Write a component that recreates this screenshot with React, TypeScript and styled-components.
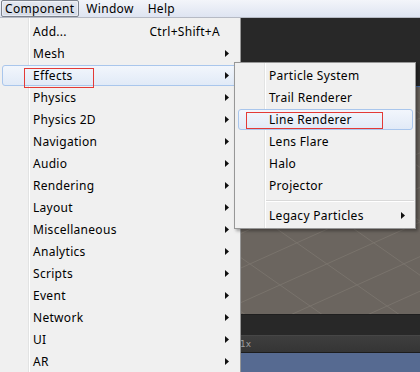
import React from "react"
import styled, { createGlobalStyle, css } from "styled-components"

const GlobalStyle = createGlobalStyle`
  html, body {
    margin: 0;
    padding: 0;
  }
  body {
    width: 420px;
    height: 372px;
    overflow: hidden;
    background: #282828;
    font-family: "Noto Sans", "Liberation Sans", sans-serif;
  }
`

const Screen = styled.div`
  display: flex;
  flex-direction: column;
  width: 420px;
  height: 372px;
`

const MenuBar = styled.div`
  display: flex;
  height: 17px;
  border-bottom: 1px solid #b6bac4;
  background: linear-gradient(#f3f5fa, #dee4f1);
  font-size: 12px;
  letter-spacing: 0.3px;
  color: #000;
`

const MenuTitle = styled.div<{ $open?: boolean }>`
  display: flex;
  align-items: center;
  box-sizing: border-box;
  height: 17px;
  padding: 0 7px;
  ${p =>
    p.$open &&
    css`
      margin-left: 1px;
      padding: 0 4px 0 3px;
      border: 1px solid #7d838e;
      border-radius: 2px;
      background: linear-gradient(#e4e8f0, #d4dae6);
      box-shadow: inset 0 0 0 1px rgba(255, 255, 255, 0.45);
    `}
`

const Workspace = styled.div`
  position: relative;
  flex: 1;
  display: flex;
  flex-direction: column;
`

const Toolbar = styled.div`
  height: 68px;
  background: #282828;
`

const Scene = styled.div`
  height: 227px;
  border-top: 1px solid #4b73ad;
  background: #6b655f;
  svg {
    display: block;
  }
`

const StatusBar = styled.div`
  height: 20px;
  border-top: 1px solid #1f1f1f;
  background: #282828;
`

const TabStrip = styled.div`
  display: flex;
  align-items: center;
  height: 16px;
  padding-left: 240px;
  border-top: 1px solid #464646;
  border-bottom: 1px solid #1c1c1c;
  background: linear-gradient(#3e3e3e, #353535);
  font-family: "DejaVu Sans", sans-serif;
  font-size: 9px;
  color: #9c9c9c;
`

const GameView = styled.div`
  flex: 1;
  background: #566a91;
`

const Menu = styled.div`
  background: #f0f0f0;
  font-size: 12px;
  letter-spacing: 0.3px;
  color: #000;
  &::before {
    content: "";
    position: absolute;
    top: 0;
    bottom: 0;
    width: 1px;
    background: #e2e3e3;
    box-shadow: 1px 0 0 #fff;
  }
`

const MainMenu = styled(Menu)`
  position: absolute;
  left: 0;
  top: 0;
  bottom: 0;
  width: 237px;
  padding: 2px 2px 0 1px;
  border-right: 1px solid #979797;
  &::before {
    left: 28px;
  }
`

const SubMenu = styled(Menu)`
  position: absolute;
  left: 234px;
  top: 44px;
  width: 177px;
  padding: 1px 1px 2px 2px;
  border: 1px solid #979797;
  box-shadow: 2px 2px 3px rgba(0, 0, 0, 0.35);
  &::before {
    left: 29px;
  }
`

const Item = styled.div<{ $active?: boolean }>`
  position: relative;
  display: grid;
  grid-template-columns: 1fr auto 4px;
  column-gap: 5px;
  align-items: center;
  box-sizing: border-box;
  height: 22px;
  padding: 0 9px 0 32px;
  white-space: nowrap;
  ${p =>
    p.$active &&
    css`
      height: 21px;
      margin: 1px 1px 0 1px;
      padding: 0 7px 0 30px;
      border: 1px solid #a9c6ec;
      border-radius: 3px;
      background: linear-gradient(#f2f6fc, #e1eaf7);
    `}
`

const Shortcut = styled.span`
  text-align: right;
`

const Separator = styled.div`
  height: 1px;
  margin: 4px 0 2px 28px;
  background: #d9d9d9;
  border-bottom: 1px solid #fff;
`

const Mark = styled.div<{ $left: number; $top: number; $w: number; $h: number }>`
  position: absolute;
  left: ${p => p.$left}px;
  top: ${p => p.$top}px;
  width: ${p => p.$w}px;
  height: ${p => p.$h}px;
  box-sizing: border-box;
  border: 1px solid #e33a36;
  pointer-events: none;
`

const Arrow = () => (
  <svg width="4" height="7" viewBox="0 0 4 7">
    <polygon points="0,0 4,3.5 0,7" fill="#111" />
  </svg>
)

type Entry = { label: string; shortcut?: string; sub?: boolean; active?: boolean }

const mainItems: Entry[] = [
  { label: "Add...", shortcut: "Ctrl+Shift+A" },
  { label: "Mesh", sub: true },
  { label: "Effects", sub: true, active: true },
  { label: "Physics", sub: true },
  { label: "Physics 2D", sub: true },
  { label: "Navigation", sub: true },
  { label: "Audio", sub: true },
  { label: "Rendering", sub: true },
  { label: "Layout", sub: true },
  { label: "Miscellaneous", sub: true },
  { label: "Analytics", sub: true },
  { label: "Scripts", sub: true },
  { label: "Event", sub: true },
  { label: "Network", sub: true },
  { label: "UI", sub: true },
  { label: "AR", sub: true },
]

const effectItems: Entry[] = [
  { label: "Particle System" },
  { label: "Trail Renderer" },
  { label: "Line Renderer", active: true },
  { label: "Lens Flare" },
  { label: "Halo" },
  { label: "Projector" },
]

// scene grid, page coords shifted up by the top of the scene (87)
const gridA = Array.from({ length: 12 }, (_, i) => 411 + 34.6 * (i - 7) - 87)
const gridB = Array.from({ length: 10 }, (_, i) => 89 + 53.9 * (i - 7) - 87)

const SceneGrid = () => (
  <svg width="420" height="227">
    {gridA.map(c => (
      <line key={"a" + c} x1={0} y1={c} x2={420} y2={c - 0.45 * 420} stroke="#79736c" strokeWidth="1" />
    ))}
    {gridB.map(c => (
      <line key={"b" + c} x1={0} y1={c} x2={420} y2={c + 0.7 * 420} stroke="#79736c" strokeWidth="1" />
    ))}
  </svg>
)

const MenuEntry = ({ entry, mark }: { entry: Entry; mark?: React.ReactNode }) => (
  <Item $active={entry.active}>
    <span>{entry.label}</span>
    <Shortcut>{entry.shortcut}</Shortcut>
    {entry.sub ? <Arrow /> : <span />}
    {mark}
  </Item>
)

const App = () => (
  <Screen>
    <GlobalStyle />
    <MenuBar>
      <MenuTitle $open>Component</MenuTitle>
      <MenuTitle>Window</MenuTitle>
      <MenuTitle>Help</MenuTitle>
    </MenuBar>
    <Workspace>
      <Toolbar />
      <Scene>
        <SceneGrid />
      </Scene>
      <StatusBar />
      <TabStrip>1x</TabStrip>
      <GameView />

      <MainMenu>
        {mainItems.map(entry => (
          <MenuEntry
            key={entry.label}
            entry={entry}
            mark={entry.active ? <Mark $left={21} $top={2} $w={70} $h={20} /> : null}
          />
        ))}
      </MainMenu>

      <SubMenu>
        {effectItems.map(entry => (
          <MenuEntry
            key={entry.label}
            entry={entry}
            mark={entry.active ? <Mark $left={7} $top={2} $w={137} $h={17} /> : null}
          />
        ))}
        <Separator />
        <MenuEntry entry={{ label: "Legacy Particles", sub: true }} />
      </SubMenu>
    </Workspace>
  </Screen>
)

export default App
